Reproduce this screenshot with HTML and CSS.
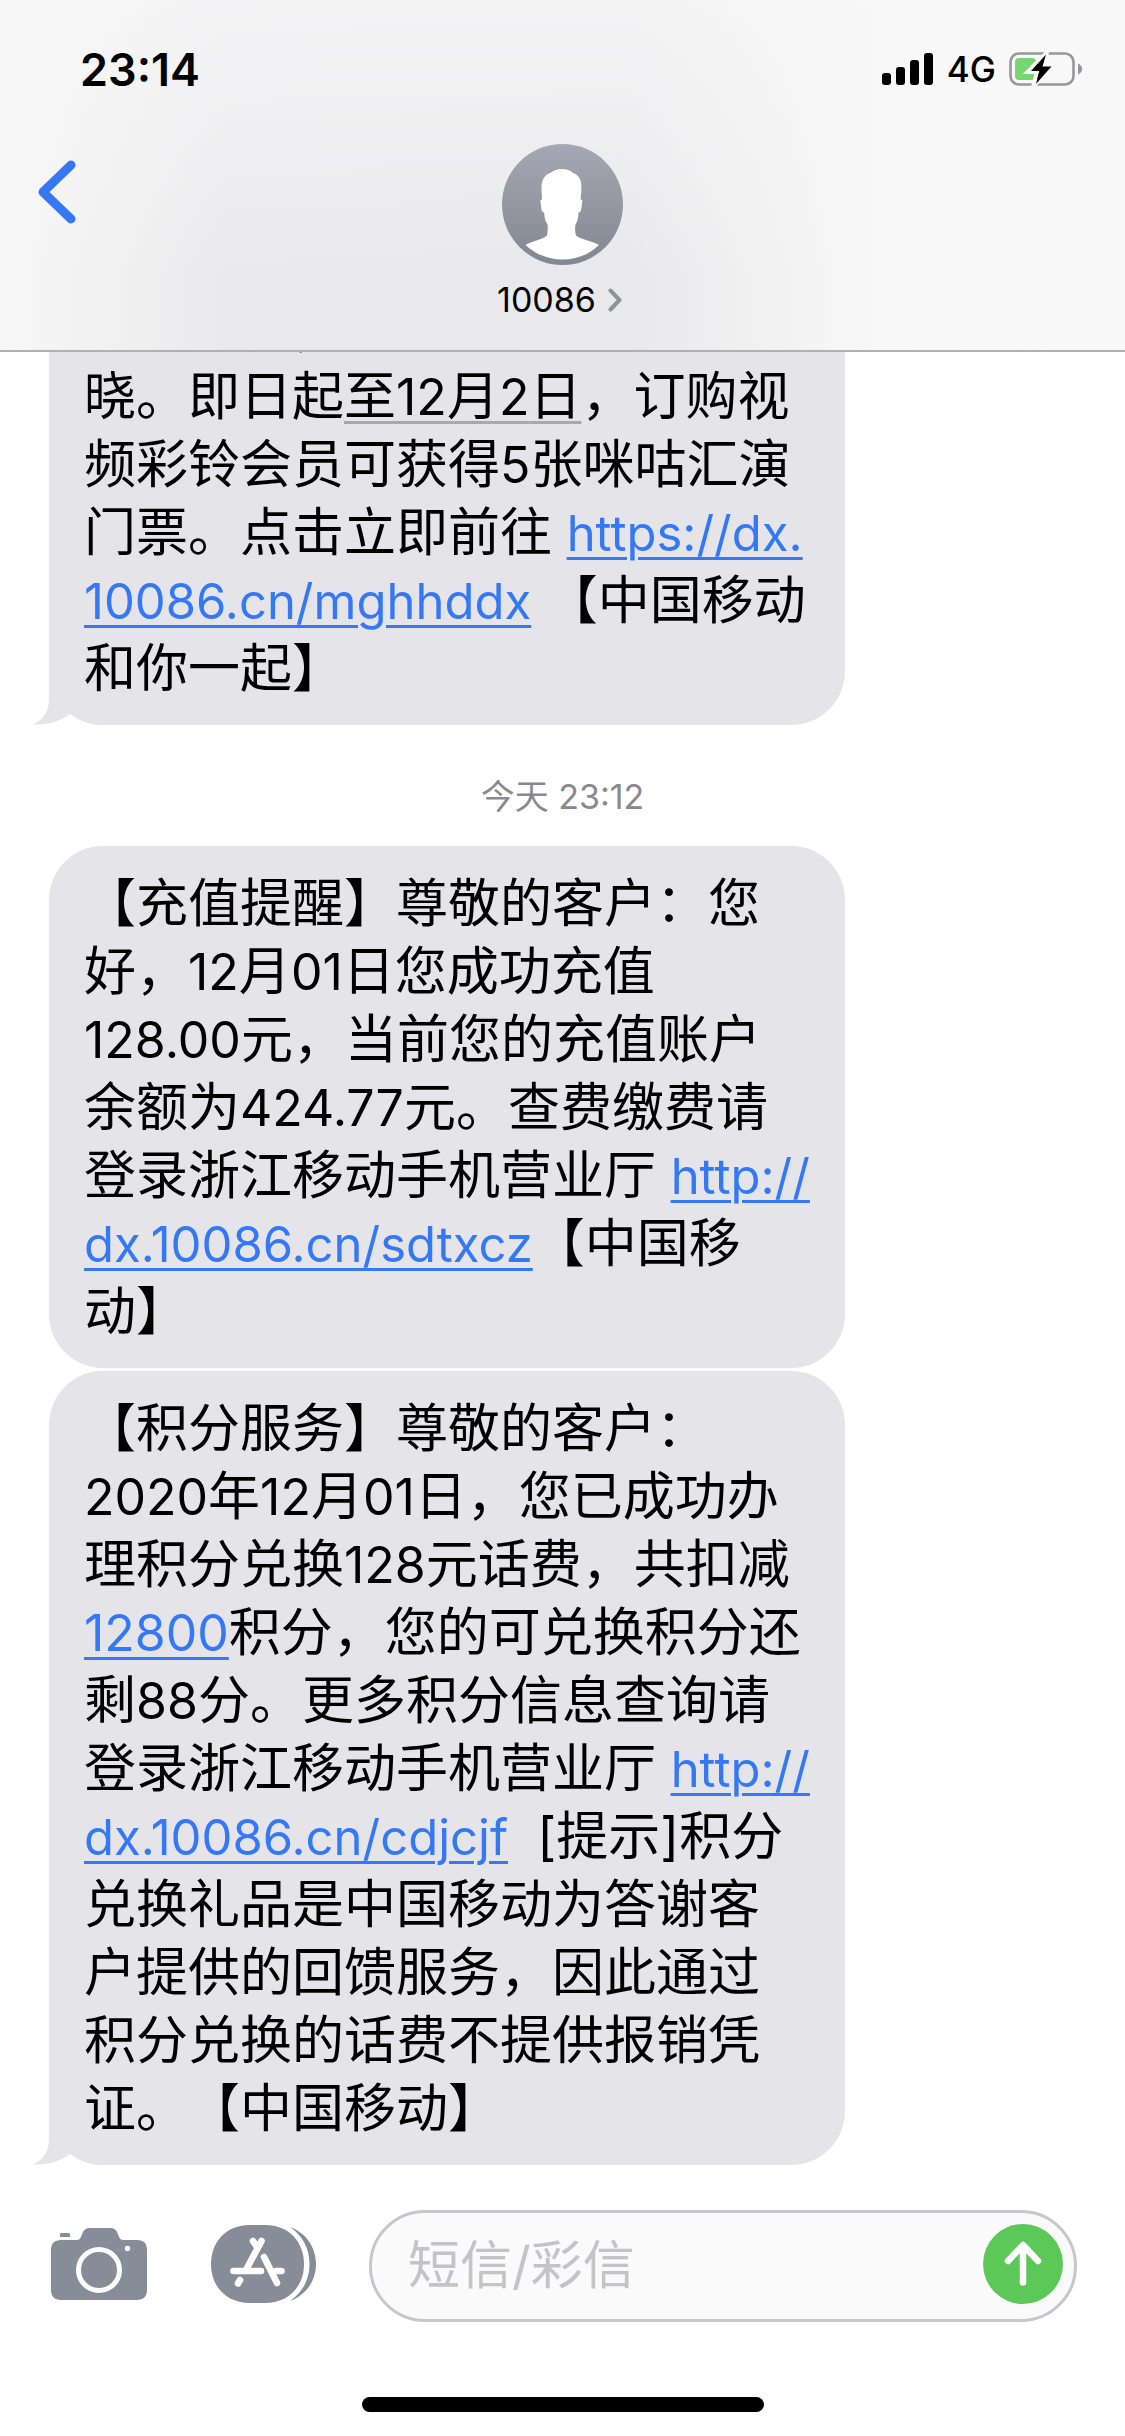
FILE: index.html
```html
<!DOCTYPE html>
<html lang="zh-CN">
<head>
<meta charset="utf-8">
<meta name="viewport" content="width=device-width, initial-scale=1">
<title>10086</title>
<link rel="stylesheet" href="styles.css">
</head>
<body>
<header class="header">
  <div class="status">
    <time class="clock">23:14</time>
    <div class="indicators">
      <svg class="signal" width="52" height="32" viewBox="0 0 52 32" aria-hidden="true">
        <rect x="0" y="20" width="9" height="12" rx="3"/>
        <rect x="14" y="14" width="9" height="18" rx="3"/>
        <rect x="28" y="7" width="9" height="25" rx="3"/>
        <rect x="42" y="0" width="9" height="32" rx="3"/>
      </svg>
      <span class="network">4G</span>
      <svg class="battery" width="74" height="36" viewBox="0 0 74 36" aria-hidden="true">
        <rect x="1.5" y="2.5" width="63" height="31" rx="8.5" fill="none" stroke="#97979a" stroke-width="2.6"/>
        <path d="M69 12.5c2.6 1 4.2 3 4.2 5.500s-1.600 4.500-4.200 5.500z" fill="#97979a"/>
        <rect x="6" y="7" width="21" height="22" rx="4" fill="#76d672"/>
        <path d="M38 1.500 18.500 21h9.500l-4 15 19-21h-8.500z" fill="#000" stroke="#f8f8f9" stroke-width="4"/>
        <path d="M37 3.500 22 20h8.500l-3.500 13 15.500-17.500h-9z" fill="#000"/>
      </svg>
    </div>
  </div>
  <nav class="nav">
    <button class="back" type="button" aria-label="返回">
      <svg width="38" height="64" viewBox="0 0 38 64" aria-hidden="true"><path d="M33 5 5 32l28 27" fill="none" stroke="#3478f6" stroke-width="9" stroke-linecap="round" stroke-linejoin="round"/></svg>
    </button>
    <button class="contact" type="button">
      <svg class="avatar" width="121" height="121" viewBox="0 0 121 121" aria-hidden="true">
        <defs><linearGradient id="shade" x1="0" y1="0" x2="0" y2="1"><stop offset="0" stop-color="#a5a8b4"/><stop offset="1" stop-color="#838791"/></linearGradient></defs>
        <circle cx="60.500" cy="60.500" r="60.500" fill="url(#shade)"/>
        <path d="M60 25c-5 0-8 1.500-11 3.500-6 2-9.500 7-9.500 15 0 4 .2 8 .6 12-1.600 0-1.800 1-1.600 3l1 7c.3 2 1.300 3 2.700 3 .2 5 1 9 3.300 12 .8 4-.2 8-.5 11-5 4.500-14 5-21.500 9.500C33 110 46 115.500 60.500 115.500S88 110 97 101c-7.500-4.500-17.500-5-23-9.500-.8-3-1.300-7-.5-11 2.200-3 2.700-7 3-12 1.500 0 2.300-1 2.700-3l1-7c.3-2 0-3-1.700-3 .5-4 .9-8 .9-12.500 0-8.500-3.400-12-8.400-14C68 26.500 65 25 60 25z" fill="#fff"/>
      </svg>
      <span class="name">10086
        <svg width="14" height="24" viewBox="0 0 14 24" aria-hidden="true"><path d="M2.500 2.500 11.500 12l-9 9.500" fill="none" stroke="#8d939b" stroke-width="4" stroke-linecap="round" stroke-linejoin="round"/></svg>
      </span>
    </button>
  </nav>
</header>

<main class="thread">
  <article class="bubble">
    　　　　，<br>
    晓。即日起<time class="date">至<span class="num">12</span>月<span class="num">2</span>日</time>，订购视<br>
    频彩铃会员可获得<span class="num">5</span>张咪咕汇演<br>
    门票。点击立即前往 <a href="https://dx.10086.cn/mghhddx">https://dx.<br>10086.cn/mghhddx</a> 【中国移动<br>
    和你一起】
    <svg class="tail" width="40" height="56" viewBox="0 0 40 56" aria-hidden="true"><path d="M16 0v31c0 11-6 20-16 24.500C15 56 28 52 38 44.500L40 30z"/></svg>
  </article>

  <time class="stamp">今天 23:12</time>

  <article class="bubble">
    【充值提醒】尊敬的客户：您<br>
    好，<span class="num">12</span>月<span class="num">01</span>日您成功充值<br>
    <span class="num">128.00</span>元，当前您的充值账户<br>
    余额为<span class="num">424.77</span>元。查费缴费请<br>
    登录浙江移动手机营业厅 <a href="http://dx.10086.cn/sdtxcz">http://<br>dx.10086.cn/sdtxcz</a>【中国移<br>
    动】
  </article>

  <article class="bubble">
    【积分服务】尊敬的客户：<br>
    <span class="num">2020</span>年<span class="num">12</span>月<span class="num">01</span>日，您已成功办<br>
    理积分兑换<span class="num">128</span>元话费，共扣减<br>
    <a class="num" href="tel:12800">12800</a>积分，您的可兑换积分还<br>
    剩<span class="num">88</span>分。更多积分信息查询请<br>
    登录浙江移动手机营业厅 <a href="http://dx.10086.cn/cdjcjf">http://<br>dx.10086.cn/cdjcjf</a> &nbsp;[提示]积分<br>
    兑换礼品是中国移动为答谢客<br>
    户提供的回馈服务，因此通过<br>
    积分兑换的话费不提供报销凭<br>
    证。【中国移动】
    <svg class="tail" width="40" height="56" viewBox="0 0 40 56" aria-hidden="true"><path d="M16 0v31c0 11-6 20-16 24.500C15 56 28 52 38 44.500L40 30z"/></svg>
  </article>
</main>

<footer class="footer">
  <form class="composer">
    <button class="tool" type="button" aria-label="相机">
      <svg width="96" height="72" viewBox="0 0 96 72" aria-hidden="true">
        <path d="M10 12h16c2 0 3-1 4-3l1.500-4C33 1.500 35 0 39 0h20c4 0 6 1.500 7.500 5L68 9c1 2 2 3 4 3h14c7 0 10 3.500 10 10v40c0 6.500-3.500 10-10 10H10C3.500 72 0 68.500 0 62V22c0-6.500 3.500-10 10-10z" fill="#868c98"/>
        <path d="M9 9V6.500Q9 5 10.500 5h7Q19 5 19 6.500V9z" fill="#868c98"/>
        <circle cx="48" cy="42" r="20.500" fill="none" stroke="#fff" stroke-width="5"/>
        <circle cx="76.500" cy="20.500" r="2.700" fill="#fff"/>
      </svg>
    </button>
    <button class="tool" type="button" aria-label="应用">
      <svg width="105" height="78" viewBox="0 0 105 78" aria-hidden="true">
        <path d="M79 2C95 8 105 22 105 39S95 70 79 76C91 68 98.500 55 98.500 39S91 10 79 2z" fill="#868c98"/>
        <path d="M39 0H54C78 0 93 17 93 39S78 78 54 78H39C15 78 0 61 0 39S15 0 39 0z" fill="#868c98"/>
        <g fill="none" stroke="#fff" stroke-width="6.600" stroke-linecap="round">
          <path d="M50.500 16 35 45M42 16l4 6M22.500 46H50M65 46h5.500M53 32l13 26M29 55l-2 3.500"/>
        </g>
      </svg>
    </button>
    <div class="field">
      <input class="input" type="text" placeholder="短信/彩信" aria-label="短信/彩信">
      <button class="send" type="submit" aria-label="发送">
        <svg width="80" height="80" viewBox="0 0 80 80" aria-hidden="true"><path d="M40 58.500V22M25 37l15-16 15 16" fill="none" stroke="#fff" stroke-width="6.500" stroke-linecap="round" stroke-linejoin="round"/></svg>
      </button>
    </div>
  </form>
  <div class="home"></div>
</footer>
</body>
</html>
```
FILE: styles.css
```css
* { box-sizing: border-box; }

body {
  margin: 0;
  height: 100vh;
  display: flex;
  flex-direction: column;
  overflow: hidden;
  background: #fff;
  color: #000;
  font-family: Inter, "Noto Sans CJK SC", sans-serif;
}

button {
  margin: 0;
  padding: 0;
  border: 0;
  background: none;
  color: inherit;
  font: inherit;
}

svg { display: block; flex: none; }

.header {
  flex: none;
  border-bottom: 2px solid #b0b0b3;
  background:
    linear-gradient(180deg, rgba(248, 248, 249, .7), rgba(248, 248, 249, 0) 80%),
    linear-gradient(90deg, #f7f7f7 0, #eaeaec 20%, #e9e9eb 56%, #f8f8f8 78%, #f9f9f9 100%);
}

.status {
  height: 138px;
  padding: 0 42px 0 80px;
  display: flex;
  align-items: center;
  justify-content: space-between;
}

.clock { font-size: 45px; font-weight: 600; }

.indicators { display: flex; align-items: center; gap: 13px; }

.network { font-size: 35px; font-weight: 500; line-height: 36px; }

.nav {
  display: grid;
  grid-template-columns: 1fr auto 1fr;
  align-items: start;
  padding: 6px 38px 30px;
}

.back { justify-self: start; padding: 16px 0; }

.contact {
  display: flex;
  flex-direction: column;
  align-items: center;
  gap: 15px;
}

.name {
  display: flex;
  align-items: center;
  gap: 12px;
  margin-right: 6px;
  font-size: 34px;
  line-height: 40px;
}

.thread {
  flex: 1;
  min-height: 0;
  overflow: hidden;
  display: flex;
  flex-direction: column;
  justify-content: flex-end;
  gap: 3px;
}

.bubble {
  position: relative;
  flex: none;
  margin: 0 280px 0 49px;
  padding: 24px 35px 22px;
  border-radius: 54px;
  background: #e5e4e9;
  font-size: 52px;
  line-height: 68px;
  white-space: nowrap;
  text-spacing-trim: space-all;
}

/* Smaller Latin runs must not stretch the 68px line */
.bubble a,
.bubble .num { line-height: 0; }

.bubble a {
  color: #3478f6;
  font-size: 49px;
  text-decoration: underline 3px;
  text-underline-offset: 6px;
}

.bubble .num { font-size: 50px; }

.date {
  text-decoration: underline 3px #a8a8ad;
  text-underline-offset: 6px;
  text-decoration-skip-ink: none;
}

.tail {
  position: absolute;
  left: -16px;
  bottom: 0;
  fill: #e5e4e9;
}

.stamp {
  flex: none;
  margin: 49px 0 26px;
  color: #8a8a8e;
  font-size: 34px;
  line-height: 40px;
  text-align: center;
}

.footer {
  flex: none;
  padding: 45px 48px 24px;
}

.composer {
  display: flex;
  align-items: center;
  margin: 0 0 75px;
}

.tool { margin: 0 0 4px 3px; }
.tool + .tool { margin-left: 64px; }

.field {
  flex: 1;
  min-width: 0;
  height: 112px;
  margin-left: 53px;
  padding: 0 11px 0 36px;
  display: flex;
  align-items: center;
  border: 3px solid #c6c6cb;
  border-radius: 56px;
  background: #fafafa;
}

.input {
  flex: 1;
  min-width: 0;
  padding: 0;
  border: 0;
  outline: 0;
  background: none;
  color: #000;
  font: inherit;
  font-size: 52px;
  line-height: 68px;
}

.input::placeholder { color: #c4c4c8; opacity: 1; }

.send {
  flex: none;
  margin-bottom: 4px;
  border-radius: 50%;
  background: #5bc858;
}

.home {
  width: 402px;
  height: 15px;
  margin: 0 auto;
  border-radius: 8px;
  background: #000;
}
```
